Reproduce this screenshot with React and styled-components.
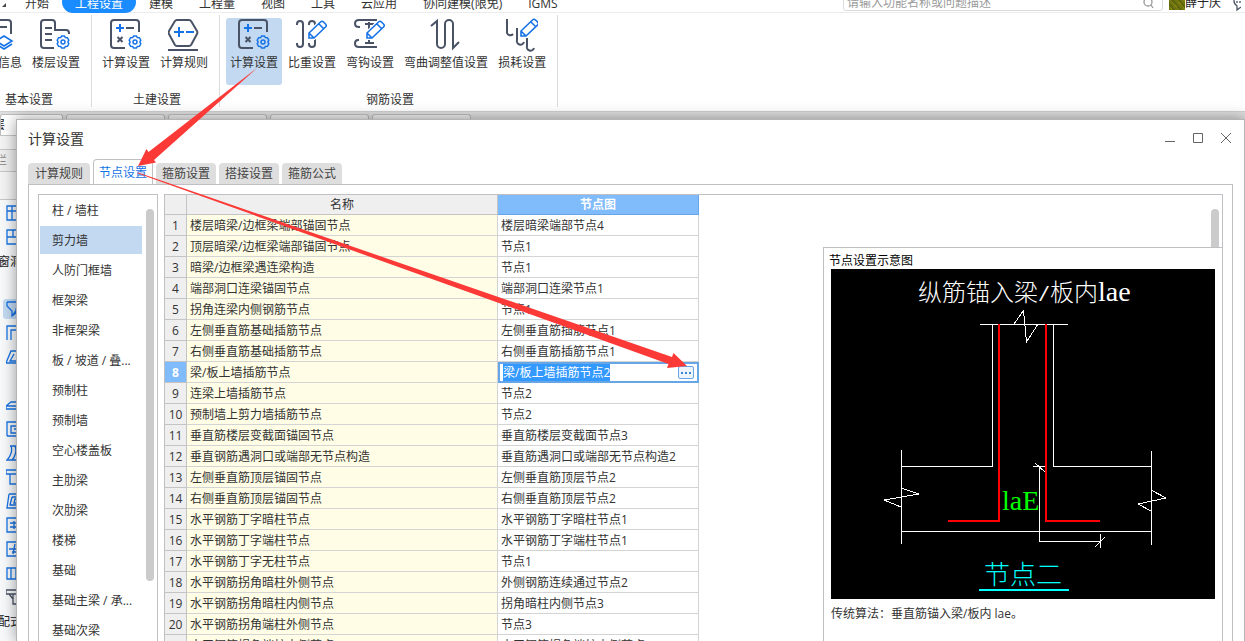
import React, { useEffect, useRef } from 'react'
import styled, { createGlobalStyle } from 'styled-components'

const GlobalStyle = createGlobalStyle`
  * {
    box-sizing: border-box;
  }
  body {
    margin: 0;
    background: #fff;
    color: #333;
    font-family: "Open Sans", "Noto Sans CJK SC", sans-serif;
    font-size: 12px;
    line-height: 18px;
  }
  button, input {
    font: inherit;
    color: inherit;
  }
  button {
    padding: 0;
    border: 0;
    background: none;
    white-space: nowrap;
  }
`

const INK = '#4a5366'
const BLUE = '#1673e6'

const Shell = styled.div`
  position: relative;
  height: 100vh;
  overflow: hidden;
  display: flex;
  flex-direction: column;
`

/* ---------- menu bar ---------- */

const MenuBar = styled.nav`
  display: flex;
  flex-shrink: 0;
  height: 22px;
  margin-top: -9px;
  box-shadow: inset 0 -1px 0 #ececec;
`
const Corner = styled.svg`
  flex-shrink: 0;
  width: 12px;
  height: 22px;
`
const MenuItem = styled.button`
  height: 22px;
  padding: 4px 13px 0;
  border-radius: 11px;
  line-height: 18px;
  background: ${props => (props.$active ? '#1a8cff' : 'none')};
  color: ${props => (props.$active ? '#fff' : '#333')};
`
const SearchBox = styled.label`
  display: flex;
  align-items: center;
  width: 320px;
  height: 20px;
  margin-left: auto;
  padding: 0 8px 0 3px;
  border: 1px solid #dcdcdc;
  border-radius: 3px;
`
const SearchInput = styled.input`
  flex: 1;
  min-width: 0;
  padding: 4px 0 0;
  border: 0;
  outline: none;
  background: none;

  &::placeholder {
    color: #9a9a9a;
    opacity: 1;
  }
`
const UserArea = styled.div`
  display: flex;
  align-items: flex-start;
  width: 82px;
  padding-left: 6px;
  color: #222;
  line-height: 24px;
`
const Avatar = styled.span`
  width: 16px;
  height: 19px;
  background: repeating-linear-gradient(50deg, #6f7410 0 2px, #86860e 2px 3px, #5d660f 3px 5px);
`

/* ---------- ribbon ---------- */

const Ribbon = styled.div`
  display: flex;
  flex-shrink: 0;
  height: 99px;
  padding: 2px 0 4px;
  border-bottom: 1px solid #cfcfcf;
`
const Group = styled.section`
  display: flex;
  flex-direction: column;
  padding: 3px 7px 0 6px;
  margin-left: ${props => (props.$clipped ? '-36px' : '0')};
  border-right: 1px solid #dcdcdc;
`
const GroupTools = styled.div`
  display: flex;
  gap: 2px;
`
const GroupLabel = styled.div`
  padding: 6px 0 0 4px;
  text-align: center;
`
const Tool = styled.button`
  display: flex;
  flex-direction: column;
  align-items: center;
  gap: 1px;
  height: 67px;
  padding: 0 4px;
  border-radius: 3px;
  background: ${props => (props.$active ? '#c2d9f1' : 'none')};
`
const ToolIcon = styled.svg`
  width: 32px;
  height: 35px;
  fill: none;
  stroke: ${INK};
  stroke-width: 2;
`

const Gear = ({ x, y }) => (
  <g transform={`translate(${x} ${y})`} stroke={BLUE} strokeWidth="1.5">
    <path d="M-1.4-6h2.8l1 1.6 2 .1L5.8-1.8 4.9 0l.9 1.8-1.4 2.5-2 .1-1 1.6h-2.8l-1-1.6-2-.1L-5.8 1.8-4.9 0l-.9-1.8 1.4-2.5 2-.1z" />
    <circle r="2" />
  </g>
)

const Pencil = ({ x, y }) => (
  <g transform={`translate(${x} ${y})`}>
    <path d="M0 17V12L11.500 1Q13-.5 14.500 1L16.500 3Q18 4.500 16.500 6L5 17Z" fill="#fff" stroke="#fff" strokeWidth="4" />
    <path d="M0 17V12L11.500 1Q13-.5 14.500 1L16.500 3Q18 4.500 16.500 6L5 17ZM0 12l5 5M10 3l4.500 4.500" stroke={BLUE} strokeWidth="1.6" />
  </g>
)

const icons = {
  info: (
    <>
      <path d="M16 2h10a3 3 0 0 1 3 3v11M16 9h9M16 30h-3" />
      <path d="M22 18l8 5-8 5-8-5zM14 26l8 5 8-5" stroke={BLUE} strokeWidth="1.6" />
    </>
  ),
  floors: (
    <>
      <path d="M14 30H4a3 3 0 0 1-3-3V5a3 3 0 0 1 3-3h8a3 3 0 0 1 3 3v7h11a3 3 0 0 1 3 3v1M5 10h7M5 16h7M5 22h7" />
      <Gear x={23} y={24} />
    </>
  ),
  calc: (
    <>
      <path d="M29 14V5a3 3 0 0 0-3-3H4a3 3 0 0 0-3 3v22a3 3 0 0 0 3 3h11M16 10h8M7.500 19l5 5m0-5l-5 5" />
      <path d="M6 10h8M10 6v8" stroke={BLUE} />
      <Gear x={25} y={24} />
    </>
  ),
  rules: (
    <>
      <path d="M9 2h12q1.500 0 2.200 1.200L29 13q.8 1.500 0 3l-5.800 10.800Q22.500 28 21 28H9q-1.500 0-2.200-1.200L1 16q-.8-1.500 0-3L6.800 3.200Q7.500 2 9 2zM0 32h30" />
      <path d="M6 14h10M11 9v10M18 14h8" stroke={BLUE} />
    </>
  ),
  weight: (
    <>
      <path d="M1 7V6a3 3 0 0 1 6 0v20a3 3 0 0 1-6 0v-1M13 7V6a3 3 0 0 1 6 0v20a3 3 0 0 1-6 0v-1" />
      <Pencil x={13} y={3} />
    </>
  ),
  hook: (
    <>
      <path d="M23 2H5q-4 0-4 3.500T5 9h1M5 22H4q-3 0-3 3.500T5 29h18M15 4v22M11 6h9M11 25h9" />
      <Pencil x={13} y={3} />
    </>
  ),
  bend: <path d="M1 8l6-5v23a4 4 0 0 0 8 0V6a4 4 0 0 1 8 0v24l6-6" />,
  loss: (
    <>
      <path d="M1 1v14a3.500 3.500 0 0 0 6 1M11 10v12a3.500 3.500 0 0 0 7 2M21 20v8a3.500 3.500 0 0 0 7 2" />
      <Pencil x={15} y={1} />
    </>
  ),
}

const groups = [
  { label: '基本设置', clipped: true, tools: [['工程信息', 'info'], ['楼层设置', 'floors']] },
  { label: '土建设置', tools: [['计算设置', 'calc'], ['计算规则', 'rules']] },
  {
    label: '钢筋设置',
    tools: [
      ['计算设置', 'calc', true],
      ['比重设置', 'weight'],
      ['弯钩设置', 'hook'],
      ['弯曲调整值设置', 'bend'],
      ['损耗设置', 'loss'],
    ],
  },
]

/* ---------- workspace behind the dialog ---------- */

const Workspace = styled.div`
  display: flex;
  flex: 1;
  flex-direction: column;
  min-height: 0;
  background: #f3f3f3;
`
const DocTabs = styled.div`
  display: flex;
  flex-shrink: 0;
  gap: 3px;
  height: 24px;
  padding-top: 2px;
  background: #dedede;
  border-bottom: 1px solid #c6c6c6;
`
const DocTab = styled.div`
  width: ${props => (props.$first ? '63px' : '99px')};
  padding-top: 1px;
  border: 1px solid #bdbdbd;
  border-bottom: 0;
  border-radius: 3px 3px 0 0;
  background: ${props => (props.$first ? '#fff' : '#eee')};
  color: #111;
  text-indent: -20px;
  overflow: hidden;
`
const PaletteTitle = styled.div`
  flex-shrink: 0;
  height: 23px;
  margin-top: 13px;
  padding-top: 2px;
  border: solid #c6c6c6;
  border-width: 1px 0;
  background: #ededed;
  color: #888;
  text-indent: -5px;
`
const Palette = styled.div`
  display: flex;
  flex-direction: column;
  flex: 1;
  margin-top: 27px;
  padding-top: 1px;
  border-top: 1px solid #c6c6c6;
  background: #f7f9fb;
`
const Slot = styled.div`
  display: flex;
  flex-shrink: 0;
  align-items: center;
  height: 24px;
  width: 32px;
  padding-left: 3px;
`
const SlotIcon = styled.svg`
  width: 22px;
  height: 20px;
  padding: 2px 3px;
  border-radius: 3px;
  background: ${props => (props.$active ? '#c2d9f1' : 'none')};
  fill: none;
  stroke: ${props => (props.$dark ? INK : BLUE)};
  stroke-width: 1.3;
`
const SlotText = styled.span`
  padding-top: 2px;
  margin-left: -17px;
  white-space: nowrap;
  color: #222;
`

const slots = [
  { d: 'M1 1h14v14H1zM1 6h14M6 1v14M11 1v14' },
  { d: 'M1 1h14v14H1zM1 8h14M7 1v7' },
  { text: '门窗洞' },
  {},
  { d: 'M1 1h14M1 1v4l5 5v5l4-3V8l5-7M6 15L15 3M11 15v-6', active: true },
  { d: 'M1 15V1h14M5 15V5h10' },
  { d: 'M5 2h12L12 14H0zM8 5L4 12h6' },
  {},
  { d: 'M0 9l5-4h12M0 9h16v3H0z' },
  { d: 'M1 15V1h15M5 12V5h10v7zM1 15h15M8 8h5' },
  { d: 'M4 1h12M5 1c2 5-1 11-4 14h14M9 1c2 5 0 11-3 14M13 4v9' },
  { d: 'M0 1h16v4H0zM4 5v10h12' },
  { d: 'M3 1h13M3 1L1 15h15M6 4h10M6 4L4 12h12M9 6h7v4H8z' },
  { d: 'M1 1h14v14H1zM4 6h10M4 10h10M8 4v8M12 4v8' },
  { d: 'M1 1h14v14H1zM3 8h10M6 11h9M9 3L7 13M13 3l-2 10' },
  { d: 'M1 3h15v11H1zM5 3v11M10 3v11' },
  { d: 'M0 1h16v4H0zM3 5l4 5M7 5v10h9', dark: true },
  { text: '装配式' },
]

/* ---------- dialog ---------- */

const Dialog = styled.section`
  position: absolute;
  top: 119px;
  left: 16px;
  right: 0;
  bottom: 0;
  display: flex;
  flex-direction: column;
  border: 1px solid #b4b4b4;
  border-bottom: 0;
  background: #fff;
  box-shadow: 0 0 14px rgba(0, 0, 0, 0.4);
`
const TitleBar = styled.header`
  display: flex;
  flex-shrink: 0;
  align-items: center;
  justify-content: space-between;
  height: 38px;
  padding: 0 12px 0 11px;
`
const Title = styled.h1`
  margin: 0;
  font-size: 14px;
  font-weight: 400;
`
const WindowButtons = styled.div`
  display: flex;
  gap: 16px;
  padding-bottom: 2px;

  svg {
    display: block;
    width: 12px;
    height: 12px;
    fill: none;
    stroke: #666;
  }
`
const Tabs = styled.div`
  display: flex;
  flex-shrink: 0;
  align-items: flex-end;
  gap: 3px;
  height: 26px;
  padding-left: 11px;
`
const Tab = styled.button`
  width: 60px;
  height: ${props => (props.$active ? '26px' : '21px')};
  margin-bottom: ${props => (props.$active ? '-1px' : '0')};
  border: ${props => (props.$active ? '1px solid #c0c0c4' : '0')};
  border-bottom: 0;
  border-radius: 4px 4px 0 0;
  background: ${props => (props.$active ? '#fff' : '#dedede')};
  color: ${props => (props.$active ? '#1673e6' : '#444')};

  &:first-child {
    width: 62px;
  }
`
const Panel = styled.div`
  display: flex;
  flex: 1;
  gap: 6px;
  min-height: 0;
  margin: 0 11px;
  padding: 9px 9px 0;
  border: 1px solid #c0c0c4;
  border-bottom: 0;
  overflow: hidden;
`
const Sidebar = styled.aside`
  display: flex;
  flex-shrink: 0;
  gap: 4px;
  width: 120px;
  padding: 1px;
  border: 1px solid #c0c0c4;
  border-bottom: 0;
`
const SideList = styled.div`
  display: flex;
  flex-direction: column;
  gap: 2px;
  width: 102px;
`
const SideItem = styled.button`
  flex-shrink: 0;
  height: 28px;
  padding: 2px 0 0 12px;
  text-align: left;
  background: ${props => (props.$active ? '#c2d9f1' : 'none')};
`
const SideThumb = styled.div`
  width: 8px;
  height: 372px;
  margin-top: 13px;
  border-radius: 4px;
  background: #cbcbcb;
`
const GridBox = styled.div`
  display: flex;
  flex: 1;
  justify-content: space-between;
  align-items: flex-start;
  min-width: 0;
  border: 1px solid #c0c0c4;
  border-bottom: 0;
`

/* ---------- table ---------- */

const Table = styled.table`
  width: 534px;
  table-layout: fixed;
  border-collapse: separate;
  border-spacing: 0;

  th, td {
    padding: 2px 3px 0;
    border-right: 1px solid #d4d4d4;
    border-bottom: 1px solid #d4d4d4;
    font-weight: 400;
    white-space: nowrap;
  }
  tbody tr {
    height: 21px;
  }
`
const HeadCell = styled.th`
  height: 20px;
  background: ${props => (props.$active ? '#80bbfb' : '#efefef')};
  color: ${props => (props.$active ? '#fff' : '#333')};

  && {
    padding-top: 1px;
    font-weight: ${props => (props.$active ? 700 : 400)};
    border-color: ${props => (props.$active ? '#66a5e6' : '#c4c4c4')};
  }
`
const NumberCell = styled.th`
  background: ${props => (props.$active ? '#80bbfb' : '#efefef')};
  color: ${props => (props.$active ? '#fff' : '#333')};

  && {
    padding: 2px 0 0;
    font-weight: ${props => (props.$active ? 700 : 400)};
    border-color: #c4c4c4;
  }
`
const NameCell = styled.td`
  background: #fffde6;
`
const EditCell = styled.td`
  && {
    padding: 0;
    border: 0;
  }
`
const Editor = styled.div`
  display: flex;
  align-items: center;
  height: 21px;
  padding: 0 3px;
  border: 2px solid #66a5e6;
`
const EditorInput = styled.input`
  flex: 1;
  min-width: 0;
  height: 17px;
  padding: 0;
  border: 0;
  outline: none;

  &::selection {
    background: #3399ff;
    color: #fff;
  }
`
const MoreButton = styled.button`
  display: flex;
  align-items: center;
  justify-content: center;
  gap: 2px;
  width: 16px;
  height: 13px;
  border: 1px solid #66a5e6;
  border-radius: 2px;
  background: #eef4fb;

  i {
    width: 2px;
    height: 2px;
    background: #3a86d8;
  }
`

/* ---------- preview ---------- */

const PreviewColumn = styled.div`
  display: flex;
  flex-direction: column;
  align-self: stretch;
  width: 399px;
`
const PreviewScroll = styled.div`
  display: flex;
  flex-shrink: 0;
  justify-content: flex-end;
  height: 52px;
  padding: 14px 3px 0 0;
`
const PreviewThumb = styled.div`
  width: 8px;
  border-radius: 4px 4px 0 0;
  background: #cbcbcb;
`
const Preview = styled.figure`
  flex: 1;
  margin: 0;
  padding: 5px 7px 0;
  border: solid #c0c0c4;
  border-width: 1px 0 0 1px;
`
const PreviewTitle = styled.div`
  margin-left: -2px;
  color: #000;
  line-height: 16px;
`
const Drawing = styled.svg`
  display: block;
  width: 384px;
  height: 330px;
  background: #000;
  fill: none;
  stroke: #fff;
  stroke-width: 1;

  text {
    stroke: none;
    font-family: "Noto Sans CJK SC", sans-serif;
    font-weight: 300;
  }
  .latin {
    font-family: "Liberation Serif", serif;
    font-size: 28px;
  }
  .slash {
    font-family: "Liberation Mono", monospace;
    font-size: 20px;
  }
`
const Caption = styled.figcaption`
  padding-top: 6px;
`

const Arrows = styled.svg`
  position: absolute;
  top: 0;
  left: 0;
  width: 700px;
  height: 400px;
  fill: #fb3a37;
  pointer-events: none;
`

const menu = ['开始', '工程设置', '建模', '工程量', '视图', '工具', '云应用', '协同建模(限免)', 'IGMS']
const tabs = ['计算规则', '节点设置', '箍筋设置', '搭接设置', '箍筋公式']
const members = [
  '柱 / 墙柱', '剪力墙', '人防门框墙', '框架梁', '非框架梁', '板 / 坡道 / 叠...', '预制柱', '预制墙',
  '空心楼盖板', '主肋梁', '次肋梁', '楼梯', '基础', '基础主梁 / 承...', '基础次梁',
]
const rows = [
  ['楼层暗梁/边框梁端部锚固节点', '楼层暗梁端部节点4'],
  ['顶层暗梁/边框梁端部锚固节点', '节点1'],
  ['暗梁/边框梁遇连梁构造', '节点1'],
  ['端部洞口连梁锚固节点', '端部洞口连梁节点1'],
  ['拐角连梁内侧钢筋节点', '节点1'],
  ['左侧垂直筋基础插筋节点', '左侧垂直筋插筋节点1'],
  ['右侧垂直筋基础插筋节点', '右侧垂直筋插筋节点1'],
  ['梁/板上墙插筋节点', '梁/板上墙插筋节点2'],
  ['连梁上墙插筋节点', '节点2'],
  ['预制墙上剪力墙插筋节点', '节点2'],
  ['垂直筋楼层变截面锚固节点', '垂直筋楼层变截面节点3'],
  ['垂直钢筋遇洞口或端部无节点构造', '垂直筋遇洞口或端部无节点构造2'],
  ['左侧垂直筋顶层锚固节点', '左侧垂直筋顶层节点2'],
  ['右侧垂直筋顶层锚固节点', '右侧垂直筋顶层节点2'],
  ['水平钢筋丁字暗柱节点', '水平钢筋丁字暗柱节点1'],
  ['水平钢筋丁字端柱节点', '水平钢筋丁字端柱节点1'],
  ['水平钢筋丁字无柱节点', '节点1'],
  ['水平钢筋拐角暗柱外侧节点', '外侧钢筋连续通过节点2'],
  ['水平钢筋拐角暗柱内侧节点', '拐角暗柱内侧节点3'],
  ['水平钢筋拐角端柱外侧节点', '节点3'],
  ['水平钢筋拐角端柱内侧节点', '水平钢筋拐角端柱内侧节点'],
]
const EDITED_ROW = 7

const NodeEditor = ({ value }) => {
  const input = useRef(null)

  useEffect(() => {
    input.current.focus()
    input.current.select()
  }, [])

  return (
    <Editor>
      <EditorInput ref={input} aria-label="节点图" defaultValue={value} />
      <MoreButton type="button" aria-label="选择节点"><i /><i /><i /></MoreButton>
    </Editor>
  )
}

const NodeTable = () => (
  <Table>
    <colgroup>
      <col width="22" />
      <col width="311" />
      <col width="201" />
    </colgroup>
    <thead>
      <tr>
        <HeadCell />
        <HeadCell>名称</HeadCell>
        <HeadCell $active>节点图</HeadCell>
      </tr>
    </thead>
    <tbody>
      {rows.map(([name, node], index) => (
        <tr key={name}>
          <NumberCell $active={index === EDITED_ROW}>{index + 1}</NumberCell>
          <NameCell>{name}</NameCell>
          {index === EDITED_ROW
            ? <EditCell><NodeEditor value={node} /></EditCell>
            : <td>{node}</td>}
        </tr>
      ))}
    </tbody>
  </Table>
)

const NodeDrawing = () => (
  <Drawing viewBox="831 269 384 330">
    <text x="918" y="301" fontSize="24" fill="#fff">
      纵筋锚入梁<tspan className="slash">/</tspan>板内<tspan className="latin">lae</tspan>
    </text>
    <g shapeRendering="crispEdges">
      <path d="M980 324.500h88M992.500 325v141M1053.500 325v141M901 466.500h92M1053 466.500h98M901.500 450v94M1151.500 451v94M901 531.500h251" />
      <path d="M1039.500 466v75.500h61M1100.500 534v14M1033 466.500h14M1095 547l10-10M1035 463l10 9" />
      <path d="M1014 324l9.500-13.500 3 31.500 11.500-18M901 488l18 6-35 6 17 7M1151 490l15 8-28 6 13 7" />
      <path d="M999 324v197h-51M1046 324v197h54" stroke="#f00" strokeWidth="2" />
      <path d="M979 590h90" stroke="#0ff" strokeWidth="2" />
    </g>
    <text className="latin" x="1002" y="510" fill="#0f0">laE</text>
    <text x="984" y="584" fontSize="26" fill="#0ff">节点二</text>
  </Drawing>
)

const SettingsDialog = () => (
  <Dialog>
    <TitleBar>
      <Title>计算设置</Title>
      <WindowButtons>
        <button type="button" aria-label="最小化"><svg><path d="M1 9.500h10" /></svg></button>
        <button type="button" aria-label="最大化"><svg><path d="M1.500 1.500h9v9h-9z" /></svg></button>
        <button type="button" aria-label="关闭"><svg><path d="M1 1l10 10M11 1L1 11" /></svg></button>
      </WindowButtons>
    </TitleBar>
    <Tabs>
      {tabs.map((tab, index) => <Tab key={tab} type="button" $active={index === 1}>{tab}</Tab>)}
    </Tabs>
    <Panel>
      <Sidebar>
        <SideList>
          {members.map((member, index) => (
            <SideItem key={member} type="button" $active={index === 1}>{member}</SideItem>
          ))}
        </SideList>
        <SideThumb />
      </Sidebar>
      <GridBox>
        <NodeTable />
        <PreviewColumn>
          <PreviewScroll><PreviewThumb /></PreviewScroll>
          <Preview>
            <PreviewTitle>节点设置示意图</PreviewTitle>
            <NodeDrawing />
            <Caption>传统算法：垂直筋锚入梁/板内 lae。</Caption>
          </Preview>
        </PreviewColumn>
      </GridBox>
    </Panel>
  </Dialog>
)

const App = () => (
  <>
    <GlobalStyle />
    <Shell>
      <MenuBar>
        <Corner><path d="M6 12v4H2z" fill="#444" /></Corner>
        {menu.map((item, index) => <MenuItem key={item} type="button" $active={index === 1}>{item}</MenuItem>)}
        <SearchBox>
          <SearchInput type="text" aria-label="搜索" placeholder="请输入功能名称或问题描述" />
          <svg width="12" height="16" fill="none" stroke="#999" strokeWidth="1.3">
            <circle cx="6" cy="9" r="4" />
            <path d="M9 12l2 3" />
          </svg>
        </SearchBox>
        <UserArea>
          <Avatar />
          薛于庆
          <svg width="20" height="22" fill="none" stroke={INK} strokeWidth="1.3">
            <path d="M20 5q-7 0-7 5 0 3 3 5v4l4-3M16 10v2M19 10v2" />
          </svg>
        </UserArea>
      </MenuBar>
      <Ribbon>
        {groups.map(group => (
          <Group key={group.label} $clipped={group.clipped}>
            <GroupTools>
              {group.tools.map(([label, icon, active]) => (
                <Tool key={label} type="button" $active={active}>
                  <ToolIcon viewBox="0 0 32 35">{icons[icon]}</ToolIcon>
                  {label}
                </Tool>
              ))}
            </GroupTools>
            <GroupLabel>{group.label}</GroupLabel>
          </Group>
        ))}
      </Ribbon>
      <Workspace>
        <DocTabs>
          <DocTab $first>首层</DocTab>
          <DocTab />
          <DocTab />
          <DocTab />
          <DocTab />
        </DocTabs>
        <PaletteTitle>栏</PaletteTitle>
        <Palette>
          {slots.map((slot, index) => (
            <Slot key={index}>
              {slot.text && <SlotText>{slot.text}</SlotText>}
              {slot.d && (
                <SlotIcon viewBox="0 0 16 16" $active={slot.active} $dark={slot.dark}>
                  <path d={slot.d} />
                </SlotIcon>
              )}
            </Slot>
          ))}
        </Palette>
      </Workspace>
      <SettingsDialog />
      <Arrows>
        <path d="M257 68L154 160l2 2.500-18 3.500 8.500-17 2 3z" />
        <path d="M138 172.500L672 357l1.500-4L687 366l-20 2 1.500-4L138 173.500z" />
      </Arrows>
    </Shell>
  </>
)

export default App
